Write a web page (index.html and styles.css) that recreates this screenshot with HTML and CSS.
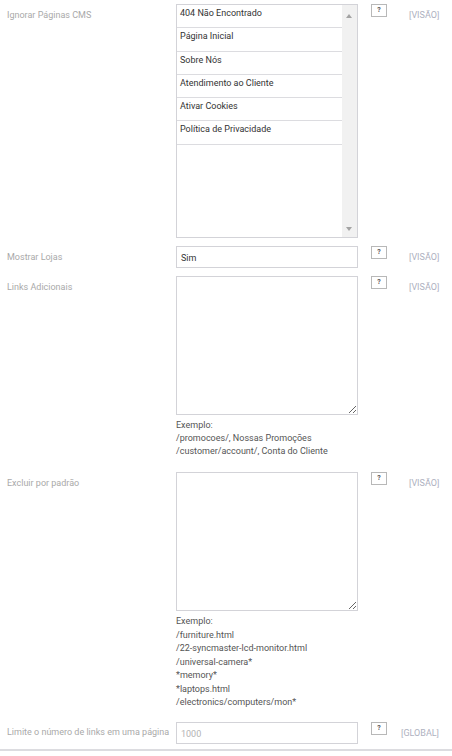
FILE: index.html
```html
<!DOCTYPE html>
<html lang="pt">
<head>
<meta charset="utf-8">
<link rel="stylesheet" href="styles.css">
</head>
<body>
<div class="form">
  <div class="row">
    <div class="label">Ignorar Páginas CMS</div>
    <div class="field">
      <div class="multiselect">
        <div class="options">
          <div class="opt">404 Não Encontrado</div>
          <div class="opt">Página Inicial</div>
          <div class="opt">Sobre Nós</div>
          <div class="opt">Atendimento ao Cliente</div>
          <div class="opt">Ativar Cookies</div>
          <div class="opt">Política de Privacidade</div>
        </div>
        <div class="scrollbar">
          <span class="arrow up"></span>
          <span class="arrow down"></span>
        </div>
      </div>
    </div>
    <div class="help"><span class="qbtn">?</span></div>
    <div class="scope">[VISÃO]</div>
  </div>

  <div class="row">
    <div class="label">Mostrar Lojas</div>
    <div class="field"><div class="input">Sim</div></div>
    <div class="help"><span class="qbtn">?</span></div>
    <div class="scope">[VISÃO]</div>
  </div>

  <div class="row">
    <div class="label">Links Adicionais</div>
    <div class="field">
      <textarea class="textarea"></textarea>
      <div class="note">Exemplo:<br>/promocoes/, Nossas Promoções<br>/customer/account/, Conta do Cliente</div>
    </div>
    <div class="help"><span class="qbtn">?</span></div>
    <div class="scope">[VISÃO]</div>
  </div>

  <div class="row">
    <div class="label">Excluir por padrão</div>
    <div class="field">
      <textarea class="textarea"></textarea>
      <div class="note note2">Exemplo:<br>/furniture.html<br>/22-syncmaster-lcd-monitor.html<br>/universal-camera*<br>*memory*<br>*laptops.html<br>/electronics/computers/mon*</div>
    </div>
    <div class="help"><span class="qbtn">?</span></div>
    <div class="scope">[VISÃO]</div>
  </div>

  <div class="row">
    <div class="label label-mid">Limite o número de links em uma página</div>
    <div class="field"><div class="input muted">1000</div></div>
    <div class="help"><span class="qbtn">?</span></div>
    <div class="scope scope-global">[GLOBAL]</div>
  </div>
</div>
<div class="rule"></div>
</body>
</html>
```

FILE: styles.css
```css
* { box-sizing: border-box; }
html, body { margin: 0; padding: 0; background: #fff; }
body {
  font-family: Roboto, "Liberation Sans", Arial, sans-serif;
  font-size: 9px;
  color: #333;
  width: 452px;
  height: 756px;
  overflow: hidden;
}
.form {
  display: flex;
  flex-direction: column;
  gap: 8px;
  padding: 4px 0 0 7px;
  height: 749px;
}
.row {
  display: grid;
  grid-template-columns: 169px 182px 14px 15px auto;
  align-items: start;
}
.label {
  color: #a9a9a9;
  padding-top: 5px;
  line-height: 12px;
  white-space: nowrap;
}
.label-mid { padding-top: 4px; }
.field { grid-column: 2; }
.help { grid-column: 4; }
.scope {
  grid-column: 5;
  color: #aeb1c0;
  padding: 5px 0 0 22px;
  line-height: 12px;
}
.scope-global { padding-left: 14px; }
.qbtn {
  display: flex;
  width: 16px;
  height: 13px;
  margin-left: -1px;
  border: 1px solid #b8b8b8;
  background: #fff;
  color: #555;
  font-size: 7px;
  font-weight: bold;
  align-items: center;
  justify-content: center;
  line-height: 1;
}
.multiselect {
  display: flex;
  height: 234px;
  border: 1px solid #d3d3d8;
  background: #fff;
}
.options { flex: 1; }
.opt {
  height: 23.3px;
  border-bottom: 1px solid #dcdce0;
  padding: 2px 3px 0;
  line-height: 12px;
  color: #333;
}
.scrollbar {
  width: 15px;
  background: #f1f1f1;
  position: relative;
}
.arrow {
  position: absolute;
  left: 4px;
  width: 0;
  height: 0;
  border-left: 3.5px solid transparent;
  border-right: 3.5px solid transparent;
}
.arrow.up { top: 9px; border-bottom: 4px solid #a3a3a3; }
.arrow.down { bottom: 6px; border-top: 4px solid #a3a3a3; }
.input {
  height: 22px;
  border: 1px solid #d3d3d8;
  padding: 5px 4px 0;
  line-height: 12px;
  color: #333;
}
.input.muted { color: #b3b3b3; }
.textarea {
  display: block;
  width: 182px;
  height: 139px;
  margin: 0;
  border: 1px solid #d3d3d8;
  border-radius: 0;
  font: inherit;
  resize: both;
  outline: none;
}
.note {
  padding-top: 4px;
  line-height: 13px;
  color: #555;
  padding-bottom: 6px;
}
.note2 { line-height: 13.5px; padding-bottom: 4px; }
.rule {
  height: 2px;
  background: #dcdce0;
  margin-top: 0;
}
```
